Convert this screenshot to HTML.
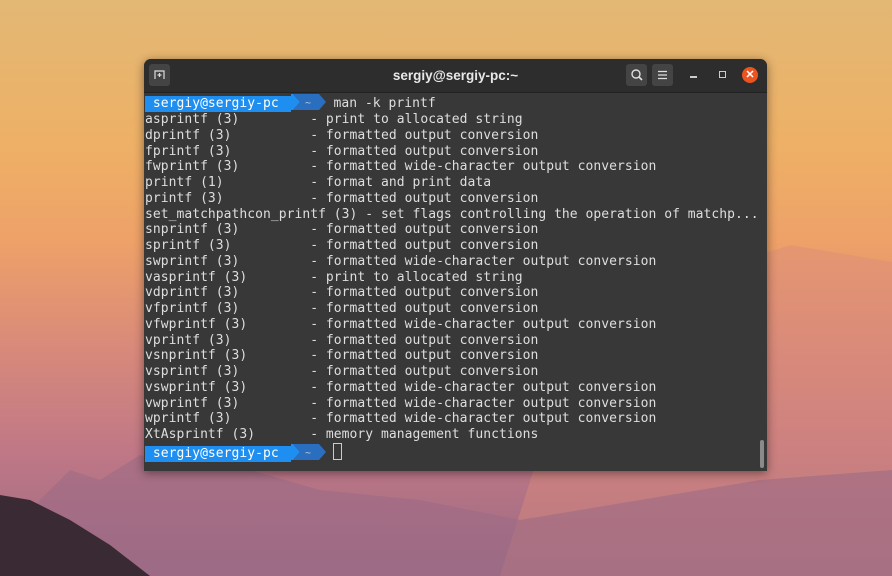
<!DOCTYPE html>
<html><head><meta charset="utf-8"><style>
html,body{margin:0;padding:0;width:892px;height:576px;overflow:hidden}
body{position:relative;background:linear-gradient(180deg,#e2b874 0%,#eeb066 25%,#eea168 42%,#d98a7a 60%,#c07886 78%,#9a6a84 100%);font-family:"Liberation Sans",sans-serif}
.bg{position:absolute;left:0;top:0}
.win{position:absolute;left:144px;top:59px;width:623px;height:412px;background:#383838;border-radius:7px 7px 0 0;box-shadow:0 2px 10px rgba(0,0,0,.45);overflow:hidden}
.tb{height:33px;background:#2d2d2d;position:relative;border-bottom:1px solid #222}
.title{position:absolute;left:0;right:0;top:9px;text-align:center;color:#e8e8e8;font-weight:bold;font-size:13.5px}
.btn{position:absolute;top:5px;width:21px;height:22px;background:#444;border-radius:3px}
.term{position:absolute;left:1px;top:35px;font-family:"DejaVu Sans Mono","Liberation Mono",monospace;font-size:13px;letter-spacing:0.04px;line-height:15.75px;color:#dedede;white-space:pre}
.p1{background:#1e8ef0;color:#fff;display:inline-block;padding-right:4px;line-height:16px}
.sb{position:absolute;right:3px;top:381px;width:4px;height:28px;background:#8a8a8a;border-radius:2px}
</style></head><body>
<svg class="bg" width="892" height="576">
<path d="M600 260 L700 275 L790 245 L892 262 L892 576 L500 576Z" fill="#dc8c7a" opacity=".45"/>
<path d="M40 500 L70 470 L100 480 L140 455 L200 470 L250 470 L320 490 L420 500 L520 520 L640 500 L760 480 L892 470 L892 576 L0 576Z" fill="#9c6a86" opacity=".6"/>
<path d="M0 495 L30 500 L70 520 L110 545 L150 576 L0 576Z" fill="#3a2a34"/>
</svg>
<div class="win">
<div class="tb">
<div class="btn" style="left:5px"><svg width="21" height="22"><path d="M6 15V7h9v8" fill="none" stroke="#ddd" stroke-width="1.2"/><path d="M10.5 9v4M8.5 11h4" stroke="#ddd" stroke-width="1.2"/></svg></div>
<div class="title">sergiy@sergiy-pc:~</div>
<div class="btn" style="left:482px"><svg width="21" height="22"><circle cx="10" cy="10" r="4" fill="none" stroke="#ddd" stroke-width="1.4"/><path d="M13 13l3 3" stroke="#ddd" stroke-width="1.6"/></svg></div>
<div class="btn" style="left:508px"><svg width="21" height="22"><path d="M6 7.5h9M6 11h9M6 14.5h9" stroke="#ddd" stroke-width="1.3"/></svg></div>
<div style="position:absolute;left:546px;top:17px;width:7px;height:1.5px;background:#ccc"></div>
<div style="position:absolute;left:575px;top:12px;width:5px;height:5px;border:1.3px solid #ccc"></div>
<div style="position:absolute;left:598px;top:8px;width:16px;height:16px;border-radius:50%;background:#e95420;color:#fff;font-size:11px;line-height:16px;text-align:center;font-weight:bold">✕</div>
</div>
<div class="term"><span class="p1"> sergiy@sergiy-pc </span><svg width="35" height="16" style="vertical-align:-3px"><path d="M0 0h2l7 8-7 8H0z" fill="#1e8ef0"/><path d="M2 0h26l7 8-7 8H2l7-8z" fill="#2a6ec0"/><text x="14" y="12" fill="#ccc" font-size="10" font-family="DejaVu Sans Mono">~</text></svg> man -k printf
asprintf (3)         - print to allocated string
dprintf (3)          - formatted output conversion
fprintf (3)          - formatted output conversion
fwprintf (3)         - formatted wide-character output conversion
printf (1)           - format and print data
printf (3)           - formatted output conversion
set_matchpathcon_printf (3) - set flags controlling the operation of matchp...
snprintf (3)         - formatted output conversion
sprintf (3)          - formatted output conversion
swprintf (3)         - formatted wide-character output conversion
vasprintf (3)        - print to allocated string
vdprintf (3)         - formatted output conversion
vfprintf (3)         - formatted output conversion
vfwprintf (3)        - formatted wide-character output conversion
vprintf (3)          - formatted output conversion
vsnprintf (3)        - formatted output conversion
vsprintf (3)         - formatted output conversion
vswprintf (3)        - formatted wide-character output conversion
vwprintf (3)         - formatted wide-character output conversion
wprintf (3)          - formatted wide-character output conversion
XtAsprintf (3)       - memory management functions
<span class="p1"> sergiy@sergiy-pc </span><svg width="35" height="16" style="vertical-align:-3px"><path d="M0 0h2l7 8-7 8H0z" fill="#1e8ef0"/><path d="M2 0h26l7 8-7 8H2l7-8z" fill="#2a6ec0"/><text x="14" y="12" fill="#ccc" font-size="10" font-family="DejaVu Sans Mono">~</text></svg> <span style="display:inline-block;width:7px;height:15px;border:1px solid #ccc;vertical-align:-3px"></span></div>
<div class="sb"></div>
</div>
</body></html>
